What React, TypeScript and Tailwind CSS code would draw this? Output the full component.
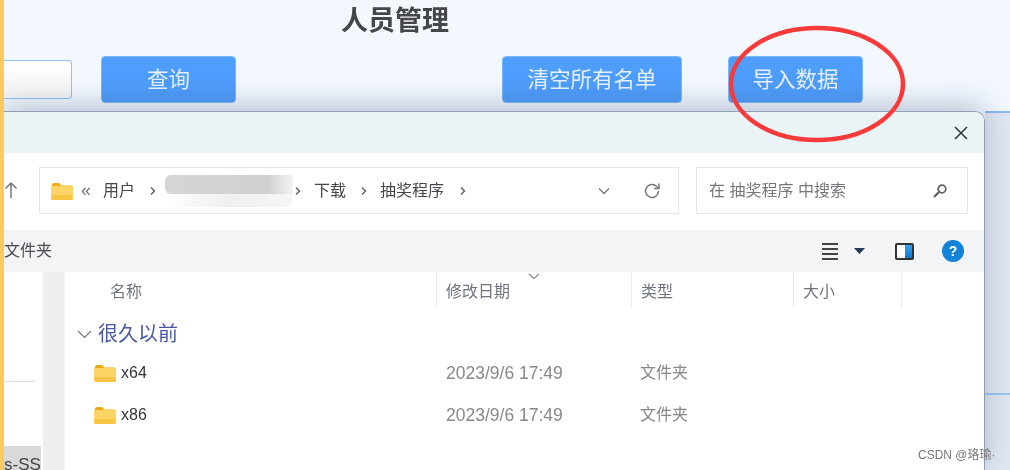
import React from 'react';

const cjk = { fontFamily: '"Liberation Sans", "Noto Sans CJK SC", sans-serif' };

const Folder = ({ className = '' }: { className?: string }) => (
  <svg className={className} viewBox="0 0 22 18" width="22" height="18">
    <path d="M1 3a2 2 0 0 1 2-2h5l2.500 2.500H20a2 2 0 0 1 2 2V7H0z" fill="#eeaa10" />
    <rect x="0" y="4" width="22" height="14" rx="2" fill="#fcd566" />
    <rect x="0" y="13" width="22" height="5" rx="2" fill="#f8c544" />
  </svg>
);

const Chevron = ({ className = '' }: { className?: string }) => (
  <svg className={className} width="6" height="10" viewBox="0 0 6 10" fill="none" stroke="#666" strokeWidth="1.500">
    <path d="M1 1.500 4.500 5 1 8.500" />
  </svg>
);

const ActionButton = ({ label, width }: { label: string; width: string }) => (
  <button className={`${width} h-[47px] pt-[2px] rounded-[4px] bg-gradient-to-b from-[#4f9fff] to-[#4c9af8] border border-[#7ab8fc] text-[21.500px] text-[#e8f2ff] flex items-center justify-center`}>
    {label}
  </button>
);

const ColumnHead = ({ label, width }: { label: string; width: string }) => (
  <div className={`${width} h-[36px] border-r border-[#ececec] pl-[9px] pt-[3px] flex items-center text-[16px] text-[#6f7480]`}>
    {label}
  </div>
);

const FileRow = ({ name }: { name: string }) => (
  <div className="h-[42px] flex items-center">
    <div className="w-[372px] pl-[29px] flex items-center gap-[5px]">
      <Folder />
      <span className="text-[16px] font-medium text-[#33363c]">{name}</span>
    </div>
    <div className="w-[195px] pl-[9px] text-[17.500px] text-[#85888d]">2023/9/6 17:49</div>
    <div className="pl-[8px] text-[16px] text-[#85888d]">文件夹</div>
  </div>
);

export default function App() {
  return (
    <div className="relative w-[1010px] h-[470px] overflow-hidden flex bg-[#f3f8fe] blur-[0.7px]" style={cjk}>
      <div className="w-[4px] bg-[#ffc95e] shrink-0 z-20" />

      <div className="w-[1006px] flex flex-col">
        {/* page behind the dialog */}
        <div className="h-[111px] shrink-0 flex flex-col">
          <div className="h-[56px] pt-[3px] pl-[337px] text-[27px] font-bold text-[#44464a] leading-[36px]">人员管理</div>
          <div className="flex items-start">
            <div className="w-[68px] h-[39px] mt-[4px] bg-gradient-to-b from-white to-[#f4f4f4] border border-l-0 border-[#8fc1fb] rounded-r-[4px]" />
            <div className="ml-[29px]"><ActionButton label="查询" width="w-[135px]" /></div>
            <div className="ml-[266px]"><ActionButton label="清空所有名单" width="w-[180px]" /></div>
            <div className="ml-[46px]"><ActionButton label="导入数据" width="w-[135px]" /></div>
          </div>
        </div>

        <div className="flex-1 flex min-h-0">
          {/* file dialog */}
          <div className="w-[981px] shrink-0 flex flex-col rounded-tr-[10px] border-t border-r border-[#8f9fb8] bg-white shadow-[0_-6px_28px_rgba(70,90,130,0.34)] z-10 overflow-hidden">
            <div className="h-[41px] shrink-0 bg-[#eaf4f7] flex items-center justify-end pr-[15px]">
              <svg width="16" height="16" viewBox="0 0 16 16" stroke="#30343a" strokeWidth="1.500" fill="none">
                <path d="M2 2l12 12M14 2 2 14" />
              </svg>
            </div>

            <div className="h-[77px] shrink-0 flex items-start pt-[14px]">
              <svg className="mt-[13px]" width="14" height="20" viewBox="0 0 14 20" stroke="#777" strokeWidth="1.500" fill="none">
                <path d="M7 18V3M1.500 8.500 7 3l5.500 5.500" />
              </svg>
              <div className="ml-[21px] w-[640px] h-[47px] border border-[#e6e6e6] flex items-center pl-[11px] text-[16px] text-[#44474c]">
                <Folder />
                <span className="ml-[8px] w-[22px] text-[18px] text-[#777]">«</span>
                <span className="w-[47px]">用户</span>
                <Chevron />
                <div className="ml-[9px] w-[128px] h-[32px] flex flex-col">
                  <div className="h-[19px] rounded-l-[6px] bg-gradient-to-r from-[#d6d6d6] via-[#d0d0d0] via-80% to-[#f3f3f3]" />
                  <div className="h-[13px] rounded-b-[8px] bg-gradient-to-r from-white via-[#efefef] to-[#f6f6f6]" />
                </div>
                <Chevron className="ml-[2px]" />
                <span className="ml-[13px] w-[47px]">下载</span>
                <Chevron />
                <span className="ml-[13px] w-[80px]">抽奖程序</span>
                <Chevron />
                <svg className="ml-[132px]" width="12" height="8" viewBox="0 0 12 8" stroke="#777" strokeWidth="1.300" fill="none">
                  <path d="M1 1.500 6 6.500l5-5" />
                </svg>
                <svg className="ml-[33px]" width="18" height="18" viewBox="0 0 18 18" stroke="#777" strokeWidth="1.500" fill="none">
                  <path d="M15.500 9a6.500 6.500 0 1 1-2-4.700L16 6.500" />
                  <path d="M16 1.500v5h-5" />
                </svg>
              </div>
              <div className="ml-[17px] w-[272px] h-[47px] border border-[#e6e6e6] flex items-center justify-between pl-[12px] pr-[19px] text-[16px] text-[#74777c]">
                <span>在 抽奖程序 中搜索</span>
                <svg width="16" height="16" viewBox="0 0 16 16" fill="none" stroke="#666">
                  <circle cx="10" cy="6" r="3.800" strokeWidth="1.800" />
                  <path d="M7 9 2 14" strokeWidth="2.400" />
                </svg>
              </div>
            </div>

            <div className="h-[42px] shrink-0 bg-[#f3f4f6] flex items-center text-[16px] text-[#4a4d52]">
              <span className="w-[818px]">文件夹</span>
              <div className="w-[16px] flex flex-col gap-[3px]">
                <div className="h-[2px] bg-[#444]" />
                <div className="h-[2px] bg-[#444]" />
                <div className="h-[2px] bg-[#444]" />
                <div className="h-[2px] bg-[#444]" />
              </div>
              <svg className="ml-[16px]" width="11" height="6" viewBox="0 0 11 6">
                <path d="M0 0h11L5.500 6z" fill="#223a5e" />
              </svg>
              <div className="ml-[30px] w-[19px] h-[17px] border-2 border-[#333] rounded-[2px] flex">
                <div className="flex-1 bg-white" />
                <div className="flex-1 bg-gradient-to-b from-[#3aa0ea] to-[#0a78d0]" />
              </div>
              <div className="ml-[28px] w-[22px] h-[22px] rounded-full bg-[#1283d8] text-white text-[14px] font-bold flex items-center justify-center">?</div>
            </div>

            <div className="flex-1 flex min-h-0">
              <div className="w-[39px] shrink-0 flex flex-col">
                <div className="h-[110px] border-b border-[#e2e2e2] mr-[8px]" />
                <div className="flex-1" />
                <div className="h-[24px] mr-[2px] bg-[#d9d9d9] overflow-hidden pt-[8px] text-[17px] leading-[22px] text-[#444] whitespace-nowrap">s-SSD</div>
              </div>
              <div className="w-[21px] shrink-0 bg-[#efefef]" />
              <div className="flex-1 relative border-l border-[#f4f4f4]">
                <div className="flex">
                  <div className="w-[372px] h-[36px] border-r border-[#ececec] pl-[45px] pt-[3px] flex items-center text-[16px] text-[#6f7480]">名称</div>
                  <ColumnHead label="修改日期" width="w-[195px]" />
                  <ColumnHead label="类型" width="w-[162px]" />
                  <ColumnHead label="大小" width="w-[108px]" />
                </div>
                <svg className="absolute left-[463px] top-[1px]" width="12" height="7" viewBox="0 0 12 7" stroke="#888" strokeWidth="1.200" fill="none">
                  <path d="M1 1 6 5.500 11 1" />
                </svg>
                <div className="h-[36px] mt-[8px] flex items-center pl-[12px] gap-[6px] text-[20px] text-[#4a5aa2]">
                  <svg width="15" height="9" viewBox="0 0 15 9" stroke="#777" strokeWidth="1.200" fill="none">
                    <path d="M1 1l6.500 6.500L14 1" />
                  </svg>
                  <span>很久以前</span>
                </div>
                <FileRow name="x64" />
                <FileRow name="x86" />
              </div>
            </div>
          </div>

          {/* page edge showing to the right of the dialog */}
          <div className="flex-1 flex flex-col bg-[#e1e7f1]">
            <div className="h-[282px] border-t-2 border-[#8dbcf2]" />
            <div className="h-[2px] bg-[#9cc4f2]" />
          </div>
        </div>
      </div>

      {/* hand-drawn annotation */}
      <svg className="absolute left-[720px] top-[20px] z-30" width="195" height="130" viewBox="0 0 195 130" fill="none">
        <ellipse cx="97" cy="64" rx="86" ry="56" stroke="#f83a3a" strokeWidth="4.500" />
      </svg>

      <div className="absolute left-[918px] top-[446px] z-30 text-[12px] text-[#777] whitespace-nowrap">CSDN @珞瑜·</div>
    </div>
  );
}
